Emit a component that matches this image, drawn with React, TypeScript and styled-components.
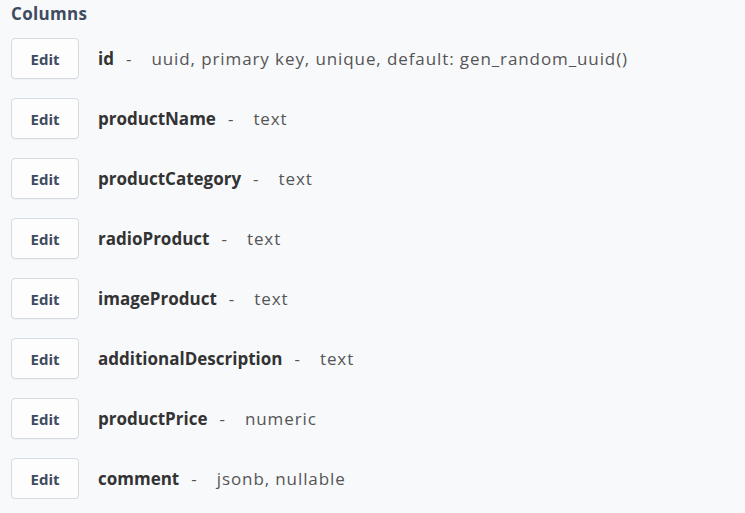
import React from 'react';
import styled, { createGlobalStyle } from 'styled-components';

const GlobalStyle = createGlobalStyle`
    body {
        margin: 0;
        background: #f8f9fb;
        font-family: 'Open Sans', 'Noto Sans', sans-serif;
    }
`;

const Page = styled.div`
    padding: 4px 11px 0;
`;

const Heading = styled.h4`
    margin: 0 0 14px;
    font-size: 17px;
    font-weight: 700;
    color: #3f4b5e;
    line-height: 20px;
    letter-spacing: 0.3px;
`;

const List = styled.div`
    display: flex;
    flex-direction: column;
    gap: 19px;
`;

const Row = styled.div`
    display: flex;
    align-items: center;
    gap: 19px;
`;

const EditButton = styled.button`
    width: 68px;
    height: 41px;
    border: 1px solid #d5dae3;
    border-radius: 4px;
    background: #fdfdfe;
    color: #3f4b5e;
    font-family: inherit;
    font-size: 15px;
    font-weight: 700;
    cursor: pointer;
    box-shadow: 0 1px 1px rgba(0, 0, 0, 0.03);
`;

const Info = styled.div`
    display: flex;
    align-items: baseline;
    font-size: 17px;
    color: #555;
`;

const Name = styled.b`
    font-weight: 700;
    color: #333;
`;

const Dash = styled.span`
    margin: 0 20px 0 12px;
`;

const Type = styled.span`
    letter-spacing: 0.9px;
`;

const columns = [
    { name: 'id', type: 'uuid, primary key, unique, default: gen_random_uuid()' },
    { name: 'productName', type: 'text' },
    { name: 'productCategory', type: 'text' },
    { name: 'radioProduct', type: 'text' },
    { name: 'imageProduct', type: 'text' },
    { name: 'additionalDescription', type: 'text' },
    { name: 'productPrice', type: 'numeric' },
    { name: 'comment', type: 'jsonb, nullable' },
];

const App: React.FC = () => (
    <Page>
        <GlobalStyle />
        <Heading>Columns</Heading>
        <List>
            {columns.map((col) => (
                <Row key={col.name}>
                    <EditButton>Edit</EditButton>
                    <Info>
                        <Name>{col.name}</Name>
                        <Dash>-</Dash>
                        <Type>{col.type}</Type>
                    </Info>
                </Row>
            ))}
        </List>
    </Page>
);

export default App;
